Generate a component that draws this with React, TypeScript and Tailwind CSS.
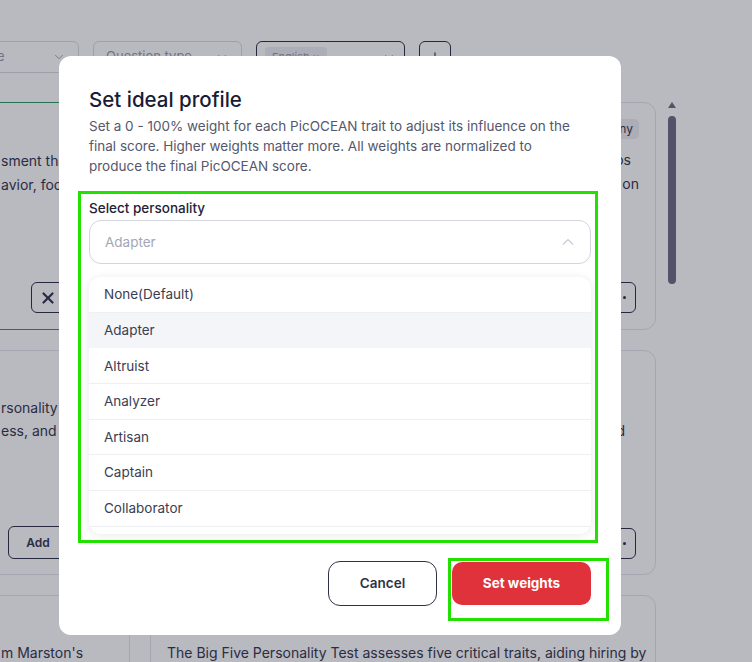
import { ChevronDown, Plus, X } from "lucide-react";

const options = ["None(Default)", "Adapter", "Altruist", "Analyzer", "Artisan", "Captain", "Collaborator", ""];

const Dots = () => (
  <div className="flex h-[31px] w-[36px] items-center justify-center gap-[3px] rounded-[6px] border border-[#2d3047]">
    <span className="h-[3px] w-[3px] rounded-full bg-[#2d3047]" />
    <span className="h-[3px] w-[3px] rounded-full bg-[#2d3047]" />
    <span className="h-[3px] w-[3px] rounded-full bg-[#2d3047]" />
  </div>
);

const App = () => {
  return (
    <div
      className="relative h-[662px] w-[752px] overflow-hidden bg-white text-[#33364c]"
      style={{ fontFamily: "Inter, 'Noto Sans', sans-serif" }}
    >
      {/* page behind the dialog */}
      <div className="flex gap-[14px] pt-[41px] ml-[-70px]">
        <div className="flex h-[32px] w-[149px] items-center justify-between rounded-[6px] border border-[#d9dbe2] pl-[66px] pr-[12px] text-[13px] text-[#9a9cab]">
          <span>e</span>
          <ChevronDown size={14} strokeWidth={1.5} />
        </div>
        <div className="flex h-[32px] w-[149px] items-center justify-between rounded-[6px] border border-[#d9dbe2] px-[12px] text-[13px] text-[#9a9cab]">
          <span>Question type</span>
          <ChevronDown size={14} strokeWidth={1.5} />
        </div>
        <div className="flex h-[32px] w-[149px] items-center justify-between rounded-[6px] border border-[#2d3047] px-[8px] text-[11px] text-[#9a9cab]">
          <span className="rounded-[4px] bg-[#eceef2] px-[7px] py-[2px]">English ×</span>
          <ChevronDown size={14} strokeWidth={1.5} />
        </div>
        <div className="flex h-[32px] w-[32px] items-center justify-center rounded-[6px] border border-[#2d3047]">
          <Plus size={14} strokeWidth={2} />
        </div>
      </div>

      <div className="mt-[29px] flex">
        <div className="ml-[-376px] grid grid-cols-[506px_506px] gap-x-[20px] gap-y-[20px]">
          {/* left column card 1 */}
          <div className="flex h-[228px] flex-col rounded-[12px] border border-[#2f9a5c] pb-[16px] pl-[376px] pt-[46px]">
            <div className="whitespace-nowrap text-[14px] leading-[24px]">sment that</div>
            <div className="whitespace-nowrap text-[14px] leading-[24px]">avior, focus</div>
            <div className="mt-auto ml-[30px] flex h-[31px] w-[34px] items-center justify-center rounded-[6px] border border-[#2d3047]">
              <X size={18} strokeWidth={3} />
            </div>
          </div>
          {/* right column card 1 */}
          <div className="flex h-[228px] flex-col rounded-[12px] border border-[#e3e4ea] px-[16px] pb-[16px] pt-[16px]">
            <div className="flex justify-end">
              <span className="rounded-[5px] bg-[#eceef2] px-[6px] py-[2px] text-[12px] leading-[16px]">Company</span>
            </div>
            <div className="mt-[9px] pr-[8px] text-right text-[14px] leading-[24px] whitespace-nowrap">videos</div>
            <div className="text-right text-[14px] leading-[24px] whitespace-nowrap">on</div>
            <div className="mt-auto flex justify-end pr-[3px]">
              <Dots />
            </div>
          </div>
          {/* left column card 2 */}
          <div className="flex h-[225px] flex-col rounded-[12px] border border-[#e3e4ea] pb-[15px] pl-[376px] pt-[45px]">
            <div className="whitespace-nowrap text-[14px] leading-[23px]">
              rsonality <span className="text-[#e08a2e]">t</span>
            </div>
            <div className="whitespace-nowrap text-[14px] leading-[23px]">ess, and</div>
            <div className="mt-auto ml-[7px] flex h-[33px] w-[60px] items-center justify-center rounded-[6px] border border-[#2d3047] text-[12px] font-semibold">
              Add
            </div>
          </div>
          {/* right column card 2 */}
          <div className="flex h-[225px] flex-col rounded-[12px] border border-[#e3e4ea] px-[16px] pb-[15px] pt-[45px]">
            <div className="pr-[60px] text-right text-[14px] leading-[23px] whitespace-nowrap">with a</div>
            <div className="pr-[14px] text-right text-[14px] leading-[23px] whitespace-nowrap">and</div>
            <div className="mt-auto flex justify-end pr-[3px]">
              <Dots />
            </div>
          </div>
          {/* row 3 */}
          <div className="h-[120px] rounded-[12px] border border-[#e3e4ea] pl-[376px] pt-[45px]">
            <div className="whitespace-nowrap text-[14px] leading-[23px]">m Marston's</div>
          </div>
          <div className="h-[120px] rounded-[12px] border border-[#e3e4ea] px-[16px] pt-[45px]">
            <div className="whitespace-nowrap text-[14px] leading-[23px]">
              The Big Five Personality Test assesses five critical traits, aiding hiring by
            </div>
          </div>
        </div>
        {/* scrollbar */}
        <div className="ml-[12px] flex w-[8px] flex-col items-center">
          <div className="h-0 w-0 border-x-[4px] border-b-[6px] border-x-transparent border-b-[#6c6c84]" />
          <div className="mt-[8px] h-[168px] w-[8px] rounded-full bg-[#6c6c84]" />
        </div>
      </div>

      {/* dimming overlay */}
      <div className="absolute inset-0 bg-[rgba(22,22,48,0.3)]" />

      {/* dialog */}
      <div className="absolute left-[59px] top-[56px] h-[579px] w-[562px] rounded-[12px] bg-white px-[30px] pt-[29px]">
        <h2 className="text-[20.5px] font-medium leading-[30px] text-[#191c35]">Set ideal profile</h2>
        <p className="mt-[1px] max-w-[486px] text-[13.5px] leading-[20px] text-[#55576b]">
          Set a 0 - 100% weight for each PicOCEAN trait to adjust its influence on the final score. Higher weights
          matter more. All weights are normalized to produce the final PicOCEAN score.
        </p>

        <div className="mt-[22px] text-[13.5px] font-medium leading-[20px] text-[#1f2237]">Select personality</div>
        <div className="mt-[2px] flex h-[44px] items-center justify-between rounded-[12px] border border-[#d3d6de] px-[15px]">
          <span className="text-[13.5px] text-[#a3a6b4]">Adapter</span>
          <svg width="12" height="8" viewBox="0 0 12 8" fill="none" className="mr-[1px]">
            <path d="M1 6.5L6 1.5L11 6.5" stroke="#a0a3b3" strokeWidth="1" />
          </svg>
        </div>

        <div className="mt-[13px] h-[257px] overflow-hidden rounded-[12px] bg-white shadow-[0_1px_10px_rgba(20,20,50,0.09)]">
          {options.map((o, i) => (
            <div
              key={i}
              className={
                o === "Adapter"
                  ? "flex h-[35.67px] items-center bg-[#f4f5f8] px-[15px] text-[13.5px] text-[#3b3e52]"
                  : "flex h-[35.67px] items-center border-b border-[#eeeff2] px-[15px] text-[13.5px] text-[#3b3e52]"
              }
            >
              {o}
            </div>
          ))}
        </div>

        <div className="mt-[27px] flex items-center justify-end gap-[15px]">
          <button className="h-[45px] w-[109px] rounded-[12px] border border-[#2f3247] text-[13.5px] font-semibold text-[#2f3247]">
            Cancel
          </button>
          <button className="h-[43px] w-[139px] rounded-[10px] bg-[#e0323a] text-[13.5px] font-bold text-white">
            Set weights
          </button>
        </div>

        {/* highlight marks */}
        <div className="absolute left-[19px] top-[135px] h-[352px] w-[520px] border-[3px] border-[#22e000]" />
        <div className="absolute left-[389px] top-[502px] h-[63px] w-[161px] border-[3px] border-[#22e000]" />
      </div>
    </div>
  );
};

export default App;
